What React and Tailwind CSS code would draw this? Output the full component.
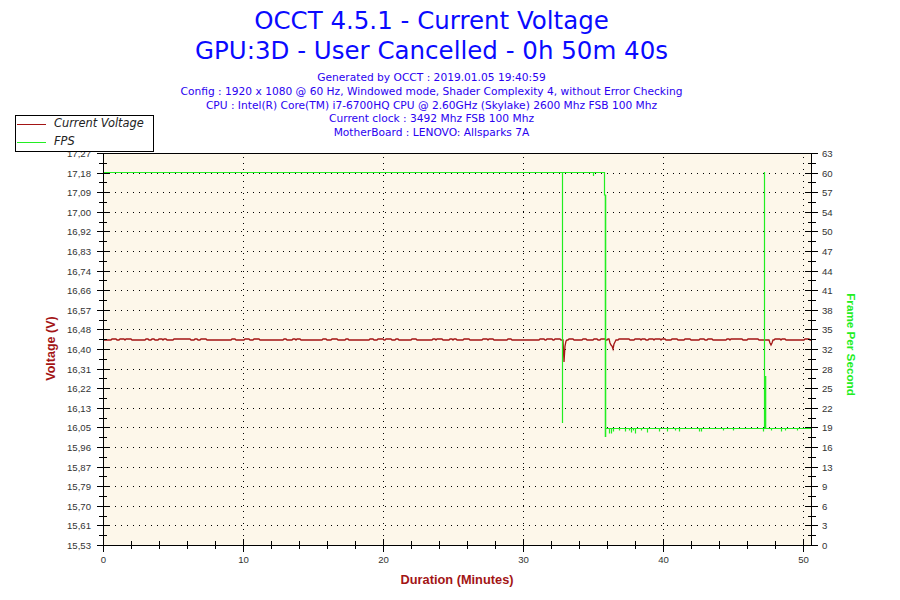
import React from "react";

// plot frame, page pixels
const LEFT = 103;
const RIGHT = 811.5;
const TOP = 153;
const BOTTOM = 545;
const STEP = 19.6;
const PX_PER_MIN = 14;

const voltLabels = [
  "15,53", "15,61", "15,70", "15,79", "15,87", "15,96", "16,05", "16,13", "16,22", "16,31", "16,40",
  "16,48", "16,57", "16,66", "16,74", "16,83", "16,92", "17,00", "17,09", "17,18", "17,27",
];
const fpsLabels = [
  "0", "3", "6", "9", "13", "16", "19", "22", "25", "28", "32",
  "35", "38", "41", "44", "47", "50", "54", "57", "60", "63",
];

const row = (i) => Math.round(BOTTOM - i * STEP) + 0.5;
const xm = (m) => Math.round(LEFT + m * PX_PER_MIN) + 0.5;

function rng(seed) {
  let s = seed;
  return () => {
    s = (s * 1103515245 + 12345) & 0x7fffffff;
    return s / 0x7fffffff;
  };
}

// voltage trace, flat with a few dips
function voltagePath() {
  const r = rng(11);
  const spikes = {
    564: 362, 565: 346, 566: 341,
    610: 343, 611: 345, 612: 346, 613: 349, 614: 344, 615: 342,
    770: 343, 771: 345, 772: 343,
  };
  let d = "M103,340";
  let hold = 0;
  let y = 340;
  for (let x = 104; x <= 811; x++) {
    if (hold > 0) hold--;
    else if (r() < 0.12) {
      y = 339;
      hold = 2 + Math.floor(r() * 4);
    } else y = 340;
    const v = spikes[x] ?? y;
    d += ` L${x},${v}`;
  }
  return d;
}

// fps trace
function fpsPath() {
  const r = rng(5);
  let d = "M103,172.5 H562.5 V423 V172.5 H593.5 V176 V172.5 H604.5 V195 H605.5 V437 V428.5";
  for (let x = 607; x <= 811; x += 2) {
    if (x === 765) {
      d += " H764.5 V172 V428.5";
      continue;
    }
    const odds = x < 700 ? 0.4 : 0.2;
    const dip = r() < odds ? 430.5 + Math.floor(r() * (x < 700 ? 4 : 2)) : 428.5;
    d += ` H${x + 0.5} V${dip} V428.5`;
  }
  return d;
}

const VOLT = voltagePath();
const FPS = fpsPath();
const GREEN = "#22ee22";

function Chart() {
  const majors = Array.from({ length: 21 }, (_, i) => i);
  const minutes = Array.from({ length: 26 }, (_, i) => i * 2);

  return (
    <svg width="900" height="460" viewBox="0 140 900 460" className="block">
      <rect x={LEFT} y={TOP} width={RIGHT - LEFT} height={BOTTOM - TOP} fill="#fdf7ea" />

      {/* dotted grid */}
      <g stroke="#000" strokeWidth="1" strokeDasharray="1 5" shapeRendering="crispEdges">
        {majors.slice(1, 20).map((i) => (
          <line key={"h" + i} x1={LEFT + 6} x2={RIGHT} y1={row(i)} y2={row(i)} />
        ))}
        {[10, 20, 30, 40, 50].map((m) => (
          <line key={"v" + m} x1={xm(m)} x2={xm(m)} y1={TOP + 4} y2={BOTTOM} />
        ))}
      </g>

      {/* traces */}
      <path d={VOLT} fill="none" stroke="#a31515" strokeWidth="1.3" />
      <path d={FPS} fill="none" stroke={GREEN} strokeWidth="1.2" />
      <line x1="605.5" x2="605.5" y1="195" y2="437" stroke={GREEN} strokeWidth="1.4" />
      <line x1="765.5" x2="765.5" y1="376" y2="428" stroke={GREEN} strokeWidth="1.6" />

      {/* frame */}
      <g stroke="#000" strokeWidth="1" shapeRendering="crispEdges" fill="none">
        <line x1={LEFT} x2={RIGHT + 0.5} y1={TOP + 0.5} y2={TOP + 0.5} />
        <line x1={LEFT} x2={RIGHT + 0.5} y1={BOTTOM + 0.5} y2={BOTTOM + 0.5} />
        <line x1={LEFT + 0.5} x2={LEFT + 0.5} y1={TOP} y2={BOTTOM + 1} />
        <line x1={RIGHT} x2={RIGHT} y1={TOP} y2={BOTTOM + 1} />

        {majors.map((i) => (
          <g key={"t" + i}>
            <line x1="97" x2="110" y1={row(i)} y2={row(i)} />
            <line x1="805" x2="818" y1={row(i)} y2={row(i)} />
            {i < 20 && (
              <>
                <line x1="99" x2="107" y1={row(i + 0.5)} y2={row(i + 0.5)} />
                <line x1="808" x2="816" y1={row(i + 0.5)} y2={row(i + 0.5)} />
              </>
            )}
          </g>
        ))}

        {minutes.map((m) =>
          m % 10 === 0 ? (
            <line key={"x" + m} x1={xm(m)} x2={xm(m)} y1="539" y2="552" />
          ) : (
            <line key={"x" + m} x1={xm(m)} x2={xm(m)} y1="541" y2="549" />
          )
        )}
      </g>

      {/* tick labels */}
      <g fontFamily="'Liberation Sans', Arial, sans-serif" fontSize="9.6" fill="#333">
        {voltLabels.map((t, i) => (
          <text key={"l" + t} x="91" y={row(i) + 3} textAnchor="end">
            {t}
          </text>
        ))}
        {fpsLabels.map((t, i) => (
          <text key={"r" + i} x="822" y={row(i) + 3}>
            {t}
          </text>
        ))}
        {[0, 10, 20, 30, 40, 50].map((m) => (
          <text key={"b" + m} x={xm(m)} y="563" textAnchor="middle">
            {m}
          </text>
        ))}
      </g>

      {/* axis titles */}
      <g fontFamily="'Liberation Sans', Arial, sans-serif" fontWeight="bold">
        <text x="457" y="583.5" fontSize="12.8" fill="#a31515" textAnchor="middle">
          Duration (Minutes)
        </text>
        <text
          transform="translate(54.5 348.5) rotate(-90)"
          fontSize="12.5"
          fill="#a31515"
          textAnchor="middle"
        >
          Voltage (V)
        </text>
        <text
          transform="translate(846.5 344.5) rotate(90)"
          fontSize="11.7"
          fill={GREEN}
          textAnchor="middle"
        >
          Frame Per Second
        </text>
      </g>
    </svg>
  );
}

function Legend() {
  return (
    <div className="absolute left-[15px] top-[115px] w-[139px] h-[37px] bg-white border border-black font-['DejaVu_Sans',sans-serif] italic text-[11.4px] text-[#222]">
      <div className="flex flex-col -mt-[1px]">
        <div className="flex items-center h-[18px]">
          <span className="ml-[1px] w-[29px] h-px bg-[#a31515]" />
          <span className="ml-[8px]">Current Voltage</span>
        </div>
        <div className="flex items-center h-[18px]">
          <span className="ml-[1px] w-[29px] h-px bg-[#22ee22]" />
          <span className="ml-[8px]">FPS</span>
        </div>
      </div>
    </div>
  );
}

export default function App() {
  return (
    <div className="relative w-[900px] h-[600px] bg-white overflow-hidden font-['DejaVu_Sans',sans-serif]">
      <header className="h-[140px] flex flex-col items-center pt-[6px] pr-[37px]">
        <div className="text-[24.5px] leading-[30px] text-[#0a0aff] flex flex-col items-center">
          <span>OCCT 4.5.1 - Current Voltage</span>
          <span>GPU:3D - User Cancelled - 0h 50m 40s</span>
        </div>
        <div className="mt-[5px] text-[10.65px] leading-[13.75px] text-[#2a00f0] flex flex-col items-center">
          <span>Generated by OCCT : 2019.01.05 19:40:59</span>
          <span>Config : 1920 x 1080 @ 60 Hz, Windowed mode, Shader Complexity 4, without Error Checking</span>
          <span>CPU : Intel(R) Core(TM) i7-6700HQ CPU @ 2.60GHz (Skylake) 2600 Mhz FSB 100 Mhz</span>
          <span>Current clock : 3492 Mhz FSB 100 Mhz</span>
          <span>MotherBoard : LENOVO: Allsparks 7A</span>
        </div>
      </header>

      <Legend />
      <Chart />
    </div>
  );
}
